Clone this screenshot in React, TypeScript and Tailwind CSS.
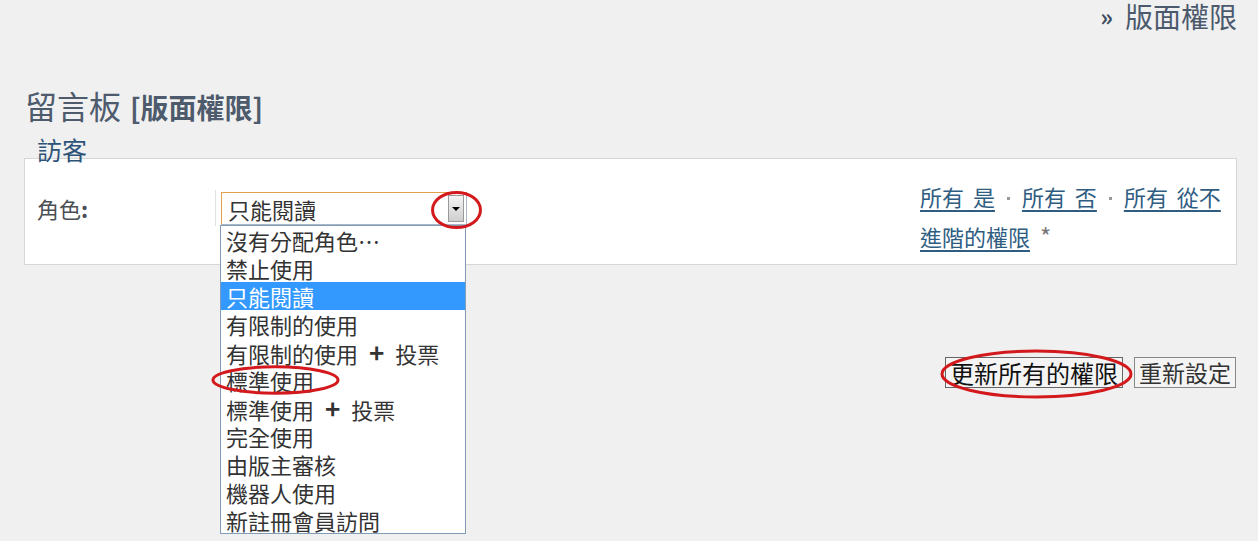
import React from 'react'

const options = [
  '沒有分配角色…',
  '禁止使用',
  '只能閱讀',
  '有限制的使用',
  '有限制的使用|投票',
  '標準使用',
  '標準使用|投票',
  '完全使用',
  '由版主審核',
  '機器人使用',
  '新註冊會員訪問',
]

function Ring({ className }: { className: string }) {
  return (
    <svg className={`absolute pointer-events-none ${className}`} viewBox="0 0 100 100" preserveAspectRatio="none">
      <ellipse cx="50" cy="50" rx="47" ry="44" fill="none" stroke="#d3191c" strokeWidth="3" vectorEffect="non-scaling-stroke" />
    </svg>
  )
}

function Option({ label }: { label: string }) {
  const [a, b] = label.split('|')
  if (!b) return <>{a}</>
  return (
    <>
      {a}
      <span className="mx-[11px] text-[26px] font-semibold">+</span>
      {b}
    </>
  )
}

export default function App() {
  return (
    <div
      className="relative w-[1258px] h-[541px] overflow-hidden bg-[#f0f0f0] text-[#4a4a4a]"
      style={{ fontFamily: '"Noto Sans CJK TC", "Noto Sans", sans-serif' }}
    >
      <div className="flex justify-end items-center gap-[12px] pr-[21px] pt-[1px] h-[31px] text-[#4b596c]">
        <span className="text-[24px] font-bold leading-[30px] text-[#3f4d60]">»</span>
        <span className="text-[28px] leading-[30px]">版面權限</span>
      </div>

      <h1 className="mt-[58px] pl-[25px] flex items-baseline gap-[9px] text-[#4d5b6d] h-[40px]">
        <span className="text-[32px] leading-none">留言板</span>
        <span className="text-[28px] font-bold leading-none">[版面權限]</span>
      </h1>

      <div className="mt-[7px] pl-[37px] relative z-10 h-[26px] text-[25px] leading-[26px] text-[#2d5379]">訪客</div>

      <div className="mx-[24px] mt-[-4px] h-[107px] w-[1213px] bg-white border border-[#d6d6d6] flex">
        <div className="w-[190px] pl-[12px] pt-[35px] text-[22px] leading-[28px] text-[#4a4f55]">
          角色<span className="font-bold">:</span>
        </div>
        <div className="mt-[31px] w-[1px] h-[36px] bg-[#e2e2e2]" />
        <div className="ml-[5px] mt-[33px] w-[246px] h-[33px] border border-[#e2a04c] border-b-[#a9b7c6] border-r-[#a9b7c6] flex items-center justify-between pl-[6px] pr-[2px]">
          <span className="text-[22px] leading-none text-[#333]">只能閱讀</span>
          <span className="w-[16px] h-[27px] bg-gradient-to-b from-[#f4f4f4] to-[#cfcfcf] border border-[#9a9a9a] flex items-center justify-center">
            <span className="w-0 h-0 border-l-[4px] border-r-[4px] border-t-[4px] border-l-transparent border-r-transparent border-t-black" />
          </span>
        </div>
        <div className="ml-auto w-[316px] pt-[17px] text-[22px] leading-[40px] text-[#2f5d82]">
          <div className="flex items-center gap-[12px] whitespace-nowrap [word-spacing:4px]">
            <a className="underline underline-offset-4">所有 是</a>
            <span className="w-[3px] h-[3px] mt-[4px] bg-[#999]" />
            <a className="underline underline-offset-4">所有 否</a>
            <span className="w-[3px] h-[3px] mt-[4px] bg-[#999]" />
            <a className="underline underline-offset-4">所有 從不</a>
          </div>
          <div className="flex items-center gap-[10px]">
            <a className="underline underline-offset-4">進階的權限</a>
            <span className="text-[#777] text-[24px]">*</span>
          </div>
        </div>
      </div>

      <div className="mt-[92px] pr-[22px] flex justify-end gap-[11px]">
        <button className="h-[31px] px-[4px] border border-[#666] bg-[#f4f4f4] text-[24px] leading-none text-[#111]">更新所有的權限</button>
        <button className="h-[31px] px-[4px] border border-[#888] bg-[#f4f4f4] text-[23px] leading-none text-[#333]">重新設定</button>
      </div>

      <ul className="absolute left-[220px] top-[225px] w-[246px] h-[309px] bg-white border border-[#7f9db9]">
        {options.map((o) => (
          <li
            key={o}
            className={`h-[28px] pl-[5px] text-[22px] leading-[28px] whitespace-nowrap ${o === '只能閱讀' ? 'bg-[#3399ff] text-white' : 'text-[#333]'}`}
          >
            <Option label={o} />
          </li>
        ))}
      </ul>

      <Ring className="left-[431px] top-[190px] w-[51px] h-[40px]" />
      <Ring className="left-[209px] top-[365px] w-[133px] h-[30px]" />
      <Ring className="left-[936px] top-[348px] w-[201px] h-[52px]" />
    </div>
  )
}
